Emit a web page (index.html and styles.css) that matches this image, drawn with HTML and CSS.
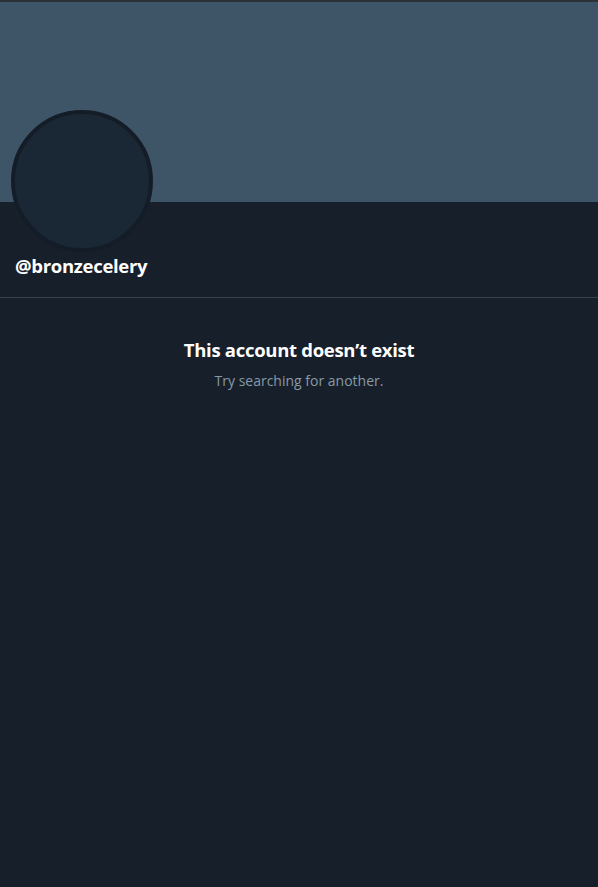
FILE: index.html
```html
<!DOCTYPE html>
<html>
<head>
<meta charset="utf-8">
<link rel="stylesheet" href="styles.css">
</head>
<body>
<div class="page">
  <div class="topbar"></div>
  <div class="banner"></div>
  <div class="profile">
    <div class="avatar-row">
      <div class="avatar"></div>
    </div>
    <div class="handle">@bronzecelery</div>
  </div>
  <div class="empty">
    <div class="title">This account doesn’t exist</div>
    <div class="sub">Try searching for another.</div>
  </div>
</div>
</body>
</html>
```
FILE: styles.css
```css
html, body {
  margin: 0;
  padding: 0;
  background: #17202a;
}
.page {
  width: 598px;
  min-height: 887px;
  background: #17202a;
  font-family: "Open Sans", "Noto Sans", sans-serif;
  color: #ffffff;
}
.topbar {
  height: 2px;
  background: #2b3137;
}
.banner {
  height: 200px;
  background: #3e5568;
}
.profile {
  display: flex;
  flex-direction: column;
  border-bottom: 1px solid #38444d;
  padding: 0 15px 19px;
}
.avatar-row {
  display: flex;
  height: 50px;
}
.avatar {
  flex: none;
  width: 134px;
  height: 134px;
  border-radius: 50%;
  background: #1a2735;
  border: 4px solid #141d27;
  margin-left: -4px;
  margin-top: -92px;
}
.handle {
  font-weight: 700;
  font-size: 18.5px;
  line-height: 24px;
  letter-spacing: -0.3px;
  margin-top: 2px;
}
.empty {
  text-align: center;
  padding-top: 40px;
}
.title {
  font-weight: 700;
  font-size: 18.5px;
  line-height: 24px;
  letter-spacing: -0.3px;
}
.sub {
  margin-top: 9px;
  font-size: 14px;
  color: #8899a6;
  line-height: 20px;
}
```
